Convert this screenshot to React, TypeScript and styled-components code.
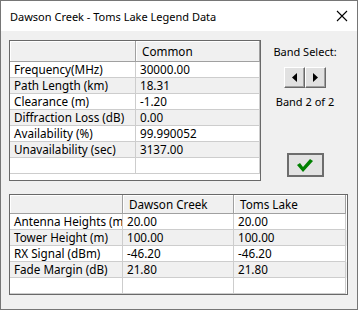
import React from 'react';
import styled, { createGlobalStyle } from 'styled-components';

const GlobalStyle = createGlobalStyle`
  body {
    margin: 0;
    background: #ffffff;
    font-family: 'Noto Sans', 'Liberation Sans', sans-serif;
  }
`;

const Window = styled.div`
  width: 358px;
  height: 310px;
  box-sizing: border-box;
  border: 1px solid #767676;
  background: #f0f0f0;
  display: flex;
  flex-direction: column;
`;

const TitleBar = styled.div`
  height: 30px;
  flex-shrink: 0;
  background: #ffffff;
  display: flex;
  align-items: center;
  justify-content: space-between;
  padding: 0 9px 0 9px;
  font-size: 11px;
  color: #000000;
`;

const Client = styled.div`
  padding: 9px 8px 0 8px;
  display: flex;
  flex-direction: column;
  gap: 13px;
`;

const TopRow = styled.div`
  display: flex;
`;

const Grid = styled.div<{ $width: number; $height: number }>`
  width: ${(p) => p.$width}px;
  height: ${(p) => p.$height}px;
  box-sizing: border-box;
  border: 1px solid #696969;
  background: #ffffff;
  overflow: hidden;
  font-size: 11.7px;
  color: #000000;
`;

const Row = styled.div<{ $cols: string; $shade?: boolean; $height: number }>`
  display: grid;
  grid-template-columns: ${(p) => p.$cols};
  height: ${(p) => p.$height}px;
  background: ${(p) => (p.$shade ? '#f0f0f0' : '#ffffff')};
`;

const Cell = styled.div`
  box-sizing: border-box;
  border-right: 1px solid #cdcdcd;
  border-bottom: 1px solid #cdcdcd;
  padding-left: 4px;
  line-height: 15px;
  white-space: nowrap;
  overflow: hidden;
`;

const HeadCell = styled.div`
  box-sizing: border-box;
  background: #f0f0f0;
  border-right: 1px solid #a0a0a0;
  border-bottom: 1px solid #a0a0a0;
  box-shadow: inset 1px 1px 0 #ffffff;
  padding-left: 6px;
  display: flex;
  align-items: center;
  white-space: nowrap;
  overflow: hidden;
`;

const SidePanel = styled.div`
  flex: 1;
  display: flex;
  flex-direction: column;
  align-items: center;
  padding-top: 4px;
  font-size: 11px;
`;

const Label = styled.div`
  line-height: 16px;
  white-space: nowrap;
`;

const ArrowGroup = styled.div`
  display: flex;
  margin: 7px 0 6px 0;
`;

const ArrowButton = styled.div`
  width: 21px;
  height: 21px;
  box-sizing: border-box;
  background: #e1e1e1;
  border-top: 1px solid #ffffff;
  border-left: 1px solid #ffffff;
  border-right: 1px solid #696969;
  border-bottom: 1px solid #696969;
  box-shadow: inset -1px -1px 0 #a0a0a0;
  display: flex;
  align-items: center;
  justify-content: center;
`;

const OkButton = styled.div`
  margin-top: 43px;
  width: 37px;
  height: 24px;
  box-sizing: border-box;
  border: 2px solid #6d6d6d;
  background: #e3e3e3;
  display: flex;
  align-items: center;
  justify-content: center;
`;

const commonRows: [string, string][] = [
  ['Frequency(MHz)', '30000.00'],
  ['Path Length (km)', '18.31'],
  ['Clearance (m)', '-1.20'],
  ['Diffraction Loss (dB)', '0.00'],
  ['Availability (%)', '99.990052'],
  ['Unavailability (sec)', '3137.00'],
  ['', ''],
];

const siteRows: [string, string, string][] = [
  ['Antenna Heights (m)', '20.00', '20.00'],
  ['Tower Height (m)', '100.00', '100.00'],
  ['RX Signal (dBm)', '-46.20', '-46.20'],
  ['Fade Margin (dB)', '21.80', '21.80'],
  ['', '', ''],
];

const topCols = '126px 124px';
const bottomCols = '113px 111px 112px';

export default function App() {
  return (
    <>
      <GlobalStyle />
      <Window>
        <TitleBar>
          <span>Dawson Creek - Toms Lake Legend Data</span>
          <svg width="12" height="12" viewBox="0 0 12 12">
            <path d="M1 1 L11 11 M11 1 L1 11" stroke="#000" strokeWidth="1.1" fill="none" />
          </svg>
        </TitleBar>
        <Client>
          <TopRow>
            <Grid $width={252} $height={141}>
              <Row $cols={topCols} $height={21}>
                <HeadCell />
                <HeadCell>Common</HeadCell>
              </Row>
              {commonRows.map((r, i) => (
                <Row key={i} $cols={topCols} $height={16} $shade={i % 2 === 1}>
                  <Cell>{r[0]}</Cell>
                  <Cell>{r[1]}</Cell>
                </Row>
              ))}
            </Grid>
            <SidePanel>
              <Label>Band Select:</Label>
              <ArrowGroup>
                <ArrowButton>
                  <svg width="5" height="9" viewBox="0 0 5 9">
                    <polygon points="5,0 0,4.5 5,9" fill="#000" />
                  </svg>
                </ArrowButton>
                <ArrowButton>
                  <svg width="5" height="9" viewBox="0 0 5 9">
                    <polygon points="0,0 5,4.5 0,9" fill="#000" />
                  </svg>
                </ArrowButton>
              </ArrowGroup>
              <Label>Band 2 of 2</Label>
              <OkButton>
                <svg width="16" height="13" viewBox="0 0 16 13">
                  <polygon points="0,6 3,4 6,8 13,0 16,2 6,13" fill="#008000" />
                </svg>
              </OkButton>
            </SidePanel>
          </TopRow>
          <Grid $width={339} $height={101}>
            <Row $cols={bottomCols} $height={19}>
              <HeadCell />
              <HeadCell>Dawson Creek</HeadCell>
              <HeadCell>Toms Lake</HeadCell>
            </Row>
            {siteRows.map((r, i) => (
              <Row key={i} $cols={bottomCols} $height={16} $shade={i % 2 === 1}>
                <Cell>{r[0]}</Cell>
                <Cell>{r[1]}</Cell>
                <Cell>{r[2]}</Cell>
              </Row>
            ))}
          </Grid>
        </Client>
      </Window>
    </>
  );
}
